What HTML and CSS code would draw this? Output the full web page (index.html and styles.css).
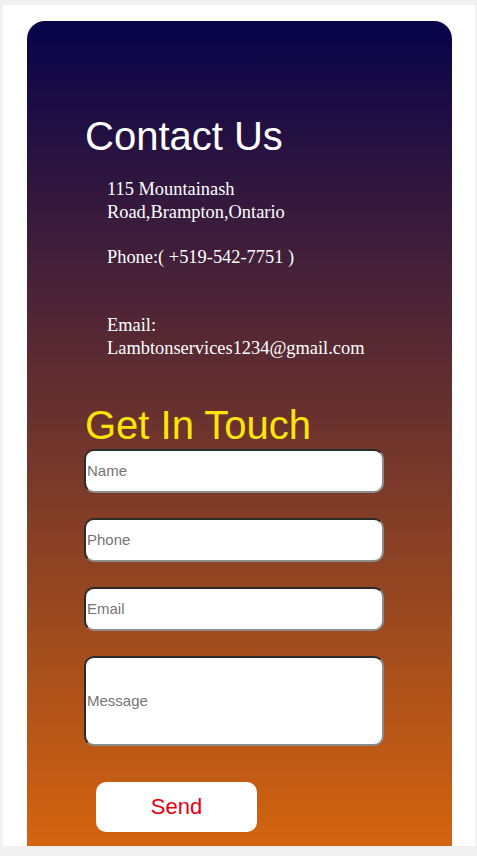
FILE: index.html
```html
<!DOCTYPE html>
<html>
<head>
<meta charset="utf-8">
<title>Contact</title>
<link rel="stylesheet" href="styles.css">
</head>
<body>
<div class="frame">
  <div class="card">
    <h1 class="title">Contact Us</h1>
    <p class="info">115 Mountainash Road,Brampton,Ontario<br><br>Phone:( +519-542-7751 )<br><br><br>Email: Lambtonservices1234@gmail.com</p>
    <h2 class="touch">Get In Touch</h2>
    <form class="form">
      <input class="field" type="text" placeholder="Name">
      <input class="field" type="text" placeholder="Phone">
      <input class="field" type="text" placeholder="Email">
      <input class="field field-msg" type="text" placeholder="Message">
      <button class="send" type="button">Send</button>
    </form>
  </div>
</div>
</body>
</html>
```
FILE: styles.css
```css
html, body {
  margin: 0;
  padding: 0;
}
body {
  background: #f1f1f1;
  height: 856px;
  overflow: hidden;
}
.frame {
  margin: 5px 2px 0 3px;
  height: 841px;
  background: #ffffff;
  overflow: hidden;
  padding-top: 16px;
  box-sizing: border-box;
}
.card {
  margin-left: 24px;
  width: 425px;
  height: 900px;
  box-sizing: border-box;
  border-radius: 18px 18px 0 0;
  background: linear-gradient(to bottom, #07034a 0px, #d4640f 825px);
  padding: 92px 0 0 58px;
}
.title {
  margin: 0;
  font-family: "Liberation Sans", Arial, sans-serif;
  font-weight: normal;
  font-size: 40px;
  line-height: 46px;
  color: #ffffff;
}
.info {
  margin: 19px 0 0 22px;
  width: 270px;
  font-family: "Liberation Serif", "Times New Roman", serif;
  font-size: 18.4px;
  line-height: 22.7px;
  color: #ffffff;
}
.touch {
  margin: 42px 0 0 0;
  font-family: "Liberation Sans", Arial, sans-serif;
  font-weight: normal;
  font-size: 40px;
  line-height: 46px;
  color: #ffe40a;
}
.form {
  display: flex;
  flex-direction: column;
  align-items: flex-start;
  gap: 25px;
  margin: 1px 0 0 -1px;
}
.field {
  box-sizing: border-box;
  width: 300px;
  height: 44px;
  margin: 0;
  padding: 0 1px;
  border: 2px solid;
  border-color: #2b2b2b #8c8c8c #8c8c8c #2b2b2b;
  border-radius: 10px;
  background: #ffffff;
  font-family: "Liberation Sans", Arial, sans-serif;
  font-size: 15px;
  color: #222;
  outline: none;
}
.field::placeholder {
  color: #757575;
}
.field-msg {
  height: 90px;
}
.send {
  margin: 11px 0 0 12px;
  width: 161px;
  height: 50px;
  border: none;
  border-radius: 10px;
  background: #ffffff;
  color: #e8000f;
  font-family: "Liberation Sans", Arial, sans-serif;
  font-size: 22px;
  cursor: pointer;
}
```
